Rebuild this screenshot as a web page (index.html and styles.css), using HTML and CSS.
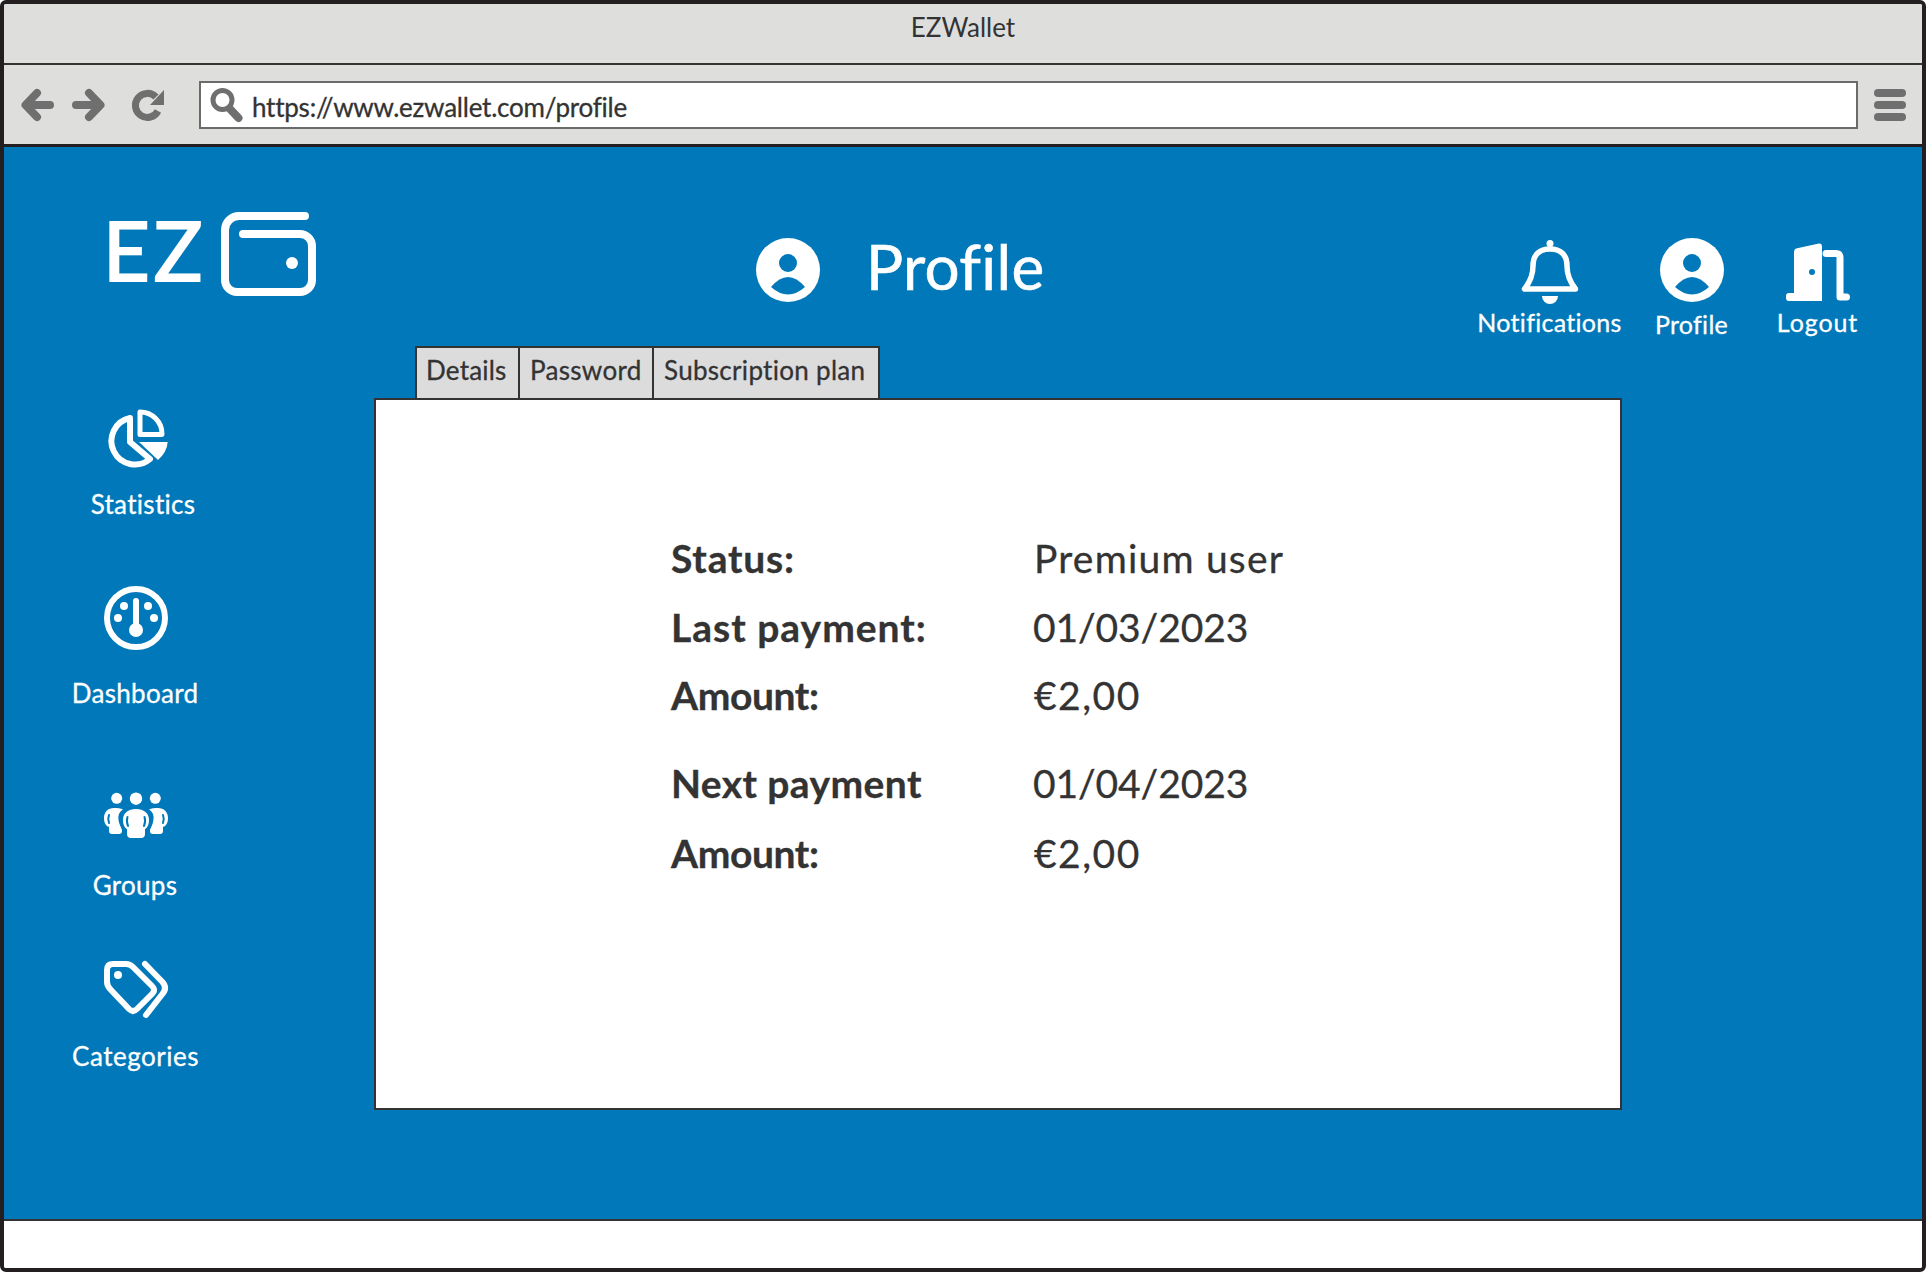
FILE: index.html
```html
<!DOCTYPE html>

<html>

	<head>
		<title>EZWallet</title>
		<link rel="stylesheet" href="styles.css">
	</head>

	<body>

		<div class="window">

			<div class="titlebar">EZWallet</div>

			<div class="toolbar">
				<svg class="tool-back" width="33" height="32" viewBox="0 0 33 32"><path class="tool-stroke" d="M16 4 L4.5 16 L16 28 M5 16 H29"/></svg>
				<svg class="tool-forward" width="33" height="32" viewBox="0 0 33 32"><path class="tool-stroke" d="M17 4 L28.5 16 L17 28 M28 16 H4"/></svg>
				<svg class="tool-reload" width="32" height="32" viewBox="0 0 32 32"><path class="tool-stroke butt" d="M24 8 A12 12 0 1 0 26 22"/><path class="tool-fill" d="M32 1 V16 H18 Z"/></svg>
				<div class="urlbar">
					<svg width="32" height="32" viewBox="0 0 32 32"><circle class="tool-ring" cx="12.5" cy="11" r="9.5"/><path class="tool-stroke" d="M20 20 L28.5 29"/></svg>
					<span class="url">https://www.ezwallet.com/profile</span>
				</div>
				<div class="burger"><i></i><i></i><i></i></div>
			</div>

			<div class="app">

				<div class="header">
					<div class="logo">
						<span class="logo-text">EZ</span>
						<svg width="95" height="84" viewBox="0 0 95 84"><path class="line" stroke-width="8" d="M84 4 H18 A14 14 0 0 0 4 18 V68 A12 12 0 0 0 16 80 H79 A12 12 0 0 0 91 68 V34 A12 12 0 0 0 79 22 H22"/><circle class="solid" cx="71" cy="51" r="6"/></svg>
					</div>
					<div class="page-title">
						<svg class="icon" viewBox="0 0 64 64"><circle class="solid" cx="32" cy="32" r="32"/><circle class="cut" cx="32" cy="25" r="9"/><path class="cut" d="M15 49 Q32 29 49 49 Q32 64 15 49 Z"/></svg>
						<h1>Profile</h1>
					</div>
					<div class="actions">
						<div class="action action-notifications">
							<svg class="icon" viewBox="0 0 64 64"><circle class="solid" cx="32" cy="5.5" r="3.5"/><path class="line" stroke-width="5.5" d="M6.5 51 H57.5 C52 44 49 38 49 28 C49 16 42 11 32 11 C22 11 15 16 15 28 C15 38 12 44 6.5 51 Z"/><path class="solid" d="M24 58 H40 A8 8 0 0 1 24 58 Z"/></svg>
							<span>Notifications</span>
						</div>
						<div class="action action-profile">
							<svg class="icon" viewBox="0 0 64 64"><circle class="solid" cx="32" cy="32" r="32"/><circle class="cut" cx="32" cy="25" r="9"/><path class="cut" d="M15 49 Q32 29 49 49 Q32 64 15 49 Z"/></svg>
							<span>Profile</span>
						</div>
						<div class="action action-logout">
							<svg class="icon" viewBox="0 0 64 64"><path class="solid" d="M8 14 Q8 11 10 10.5 L33 5.5 Q36 5 36 8 V63 H3 Q0 63 0 60 V58 Q0 55 3 55 H8 Z"/><circle class="cut" cx="26" cy="34" r="3"/><path class="line" stroke-width="7" d="M40 15.5 H50 Q54 15.5 54 20 V59 H60.5"/></svg>
							<span>Logout</span>
						</div>
					</div>
				</div>

				<div class="content">

					<div class="sidebar">
						<div class="nav-item nav-statistics">
							<svg class="icon" viewBox="0 0 64 64"><path class="line" stroke-width="6" d="M26 12 V36 L46 53 A23.5 23.5 0 1 1 26 12"/><path class="line" stroke-width="5" d="M36 6 V28.5 H58 A22 22 0 0 0 36 6 Z"/><path class="solid" d="M35 36 H63.7 Q63 46 54 54 Z"/></svg>
							<span>Statistics</span>
						</div>
						<div class="nav-item nav-dashboard">
							<svg class="icon" viewBox="0 0 64 64"><circle class="line" stroke-width="6" cx="32" cy="32" r="29"/><circle class="solid" cx="20" cy="20" r="4"/><circle class="solid" cx="44" cy="20" r="4"/><circle class="solid" cx="14" cy="32" r="4"/><circle class="solid" cx="50" cy="32" r="4"/><path class="line" stroke-width="6" d="M32 15 V40"/><circle class="solid" cx="32" cy="44" r="7"/></svg>
							<span>Dashboard</span>
						</div>
						<div class="nav-item nav-groups">
							<svg class="icon" viewBox="0 0 64 64">
								<circle class="solid" cx="12.7" cy="14.3" r="5.5"/><circle class="solid" cx="32" cy="14.7" r="6.2"/><circle class="solid" cx="51.3" cy="14.3" r="5.5"/>
								<path class="solid" d="M32 25 C40 25 45 29 45 36 C45 41 43 44 41 45 V50 Q41 54 37 54 H27 Q23 54 23 50 V45 C21 44 19 41 19 36 C19 29 24 25 32 25 Z"/>
								<path class="slit" d="M23.5 33 Q22 37 24 42 M40.5 33 Q42 37 40 42"/>
								<path class="solid" d="M10 24 C13 24 17 24 19 25.5 C15 28 13 32 15.5 40 L18 46 V47 Q18 50 15 50 H8 Q5 50 5 47 V43 C2 42 0 39 0 34 C0 28 4 24 10 24 Z"/>
								<path class="slit" d="M5 31 Q3.5 35 5 39"/>
								<path class="solid" d="M54 24 C51 24 47 24 45 25.5 C49 28 51 32 48.5 40 L46 46 V47 Q46 50 49 50 H56 Q59 50 59 47 V43 C62 42 64 39 64 34 C64 28 60 24 54 24 Z"/>
								<path class="slit" d="M59 31 Q60.5 35 59 39"/>
							</svg>
							<span>Groups</span>
						</div>
						<div class="nav-item nav-categories">
							<svg class="icon" viewBox="0 0 64 64"><path class="line" stroke-width="6" d="M3 13 Q3 7 9 7 H22 Q26 7 29 10 L48 29 Q52 33 48 37 L33 52 Q29 56 25 52 L7 33 Q3 29 3 25 Z"/><circle class="solid" cx="14" cy="18" r="4"/><path class="line" stroke-width="6" d="M41 7 L58 24.5 Q64 31 58 37.5 L42 58"/></svg>
							<span>Categories</span>
						</div>
					</div>

					<div class="main">
						<div class="tabs">
							<div class="tab tab-details">Details</div>
							<div class="tab tab-password">Password</div>
							<div class="tab tab-plan">Subscription plan</div>
						</div>
						<div class="panel">
							<div class="plan-info">
								<b>Status:</b><span class="val-status">Premium user</span>
								<b class="key-last">Last payment:</b><span class="val-date">01/03/2023</span>
								<b class="key-amount">Amount:</b><span class="val-money">€2,00</span>
								<b class="key-next">Next payment</b><span class="val-date">01/04/2023</span>
								<b class="key-amount">Amount:</b><span class="val-money">€2,00</span>
							</div>
						</div>
					</div>

				</div>

			</div>

			<div class="footer"></div>

		</div>

	</body>

</html>
```

FILE: styles.css
```css
html, body { margin:0; padding:0; }
body {
	font-family: "Lato", "Liberation Sans", sans-serif;
	font-variant-ligatures:none;
	color:#333;
	background:#fff;
}
svg { display:block; overflow:visible; flex:none; }

.window {
	box-sizing:border-box;
	width:1926px;
	height:1272px;
	border:4px solid #231f20;
	border-radius:6px;
	display:flex;
	flex-direction:column;
	overflow:hidden;
}

.titlebar {
	height:59px;
	line-height:46px;
	flex:none;
	text-align:center;
	font-size:26px;
	background:#dededc;
	border-bottom:2px solid #333;
}

.toolbar {
	height:79px;
	flex:none;
	display:flex;
	align-items:center;
	padding:0 16px 0 17px;
	background:#dededc;
	border-bottom:3px solid #231f20;
}
.tool-forward { margin-left:18px; }
.tool-reload { margin-left:27px; }
.tool-stroke { fill:none; stroke:#6f6f6f; stroke-width:8; stroke-linecap:round; stroke-linejoin:round; }
.tool-stroke.butt { stroke-width:7; stroke-linecap:butt; }
.tool-fill { fill:#6f6f6f; }
.tool-ring { fill:none; stroke:#6f6f6f; stroke-width:5; }
.urlbar {
	flex:1;
	height:48px;
	box-sizing:border-box;
	margin:0 16px 0 35px;
	padding-left:9px;
	display:flex;
	align-items:center;
	background:#fff;
	border:2px solid #6b6b6b;
}
.url { margin:4px 0 0 10px; font-size:26px; letter-spacing:-0.23px; -webkit-text-stroke:0.3px #333; }
.burger { width:32px; display:flex; flex-direction:column; gap:4px; }
.burger i { display:block; height:8px; border-radius:4px; background:#6f6f6f; }

.app {
	flex:1;
	min-height:0;
	background:#0178b9;
	border-bottom:2px solid #333;
	color:#fff;
	display:flex;
	flex-direction:column;
}
.footer { height:47px; flex:none; background:#fff; }

.solid { fill:#fff; }
.cut { fill:#0178b9; }
.line { fill:none; stroke:#fff; stroke-linecap:round; stroke-linejoin:round; }
.slit { fill:none; stroke:#0178b9; stroke-width:2; stroke-linecap:round; }
.icon { width:64px; height:64px; }

.header { height:199px; flex:none; display:flex; align-items:flex-start; }
.logo {
	width:653px;
	margin:65px 0 0 99px;
	display:flex;
	align-items:flex-start;
	gap:17px;
}
.logo-text { font-size:81px; line-height:84px; margin-top:-4px; width:101px; letter-spacing:4px; -webkit-text-stroke:2px #fff; }
.page-title { margin-top:91px; display:flex; align-items:center; gap:46px; }
.page-title h1 { margin:-8px 0 0; font-size:62px; font-weight:400; line-height:64px; letter-spacing:0.3px; -webkit-text-stroke:0.6px #fff; }
.actions { margin:91px 65px 0 auto; display:flex; gap:35px; }
.action { display:flex; flex-direction:column; align-items:center; font-size:25px; letter-spacing:0.3px; -webkit-text-stroke:0.3px #fff; }
.action span { margin-top:5px; white-space:nowrap; }
.action-notifications { width:143px; }
.action-profile { width:71px; }
.action-profile span { margin-top:7px; }
.action-logout { width:79px; margin-left:16px; letter-spacing:0.9px; }

.content { flex:1; display:flex; }
.sidebar { width:370px; flex:none; padding-top:60px; box-sizing:border-box; }
.nav-item {
	width:130px;
	margin-left:67px;
	display:flex;
	flex-direction:column;
	align-items:center;
	font-size:26px;
	letter-spacing:0.3px;
	-webkit-text-stroke:0.3px #fff;
	white-space:nowrap;
}
.nav-statistics span { margin:18px 0 0 14px; }
.nav-dashboard { margin-top:66px; }
.nav-dashboard span { margin:27px 0 0 -2px; }
.nav-groups { margin-top:75px; }
.nav-groups span { margin:21px 0 0 -2px; }
.nav-categories { margin-top:56px; }
.nav-categories span { margin:19px 0 0 -1px; letter-spacing:0.5px; }

.main { flex:none; width:1248px; color:#333; }
.tabs { display:flex; margin-left:41px; height:54px; margin-bottom:-2px; position:relative; }
.tab {
	box-sizing:border-box;
	height:54px;
	line-height:44px;
	padding-left:10px;
	margin-right:-2px;
	background:#dcdcdc;
	border:2px solid #333;
	font-size:26px;
	letter-spacing:0.3px;
	-webkit-text-stroke:0.3px #333;
}
.tab-details { width:105px; padding-left:9px; letter-spacing:0.2px; }
.tab-password { width:136px; }
.tab-plan { width:228px; }

.panel {
	box-sizing:border-box;
	width:1248px;
	height:712px;
	background:#fff;
	border:2px solid #333;
	padding:135px 0 0 295px;
}
.plan-info {
	display:grid;
	grid-template-columns:363px auto;
	grid-template-rows:69px 68px 88px 70px 70px;
	align-items:start;
	font-size:39px;
	line-height:46px;
	-webkit-text-stroke:0.3px #333;
}
.plan-info b { font-weight:700; letter-spacing:0.8px; }
.plan-info .key-last { letter-spacing:1px; }
.plan-info .key-amount { letter-spacing:-0.4px; }
.plan-info .key-next { letter-spacing:0.4px; }
.val-status { letter-spacing:1.2px; }
.val-date { letter-spacing:-0.1px; margin-left:-1px; }
.val-money { letter-spacing:1.5px; }
```
